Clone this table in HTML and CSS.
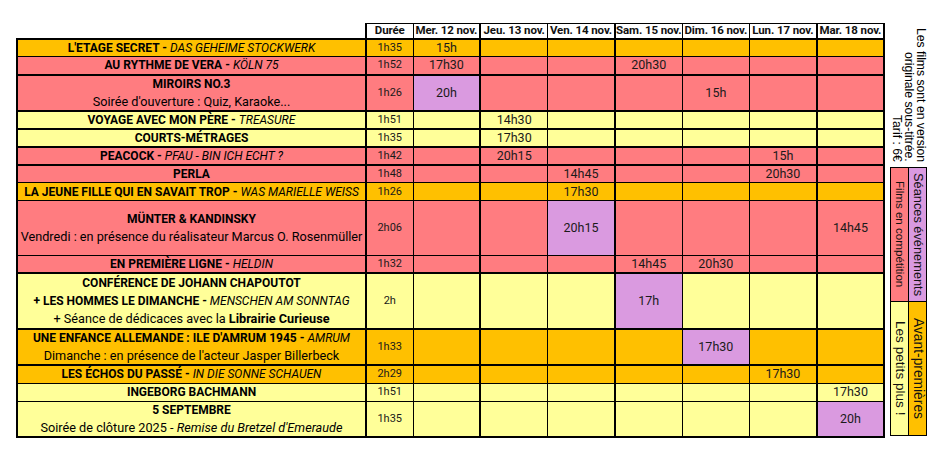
FILE: index.html
```html
<!DOCTYPE html>
<html lang="fr">
<head>
<meta charset="utf-8">
<title>Programme</title>
<link rel="stylesheet" href="styles.css">
</head>
<body>
<div class="page">
  <table class="schedule">
    <colgroup>
      <col class="c-title"><col class="c-dur">
      <col class="c-day"><col class="c-day"><col class="c-day"><col class="c-day"><col class="c-day"><col class="c-day"><col class="c-day">
    </colgroup>
    <thead>
      <tr class="head">
        <th class="blank"></th>
        <th>Durée</th>
        <th>Mer. 12 nov.</th>
        <th>Jeu. 13 nov.</th>
        <th>Ven. 14 nov.</th>
        <th>Sam. 15 nov.</th>
        <th>Dim. 16 nov.</th>
        <th>Lun. 17 nov.</th>
        <th>Mar. 18 nov.</th>
      </tr>
    </thead>
    <tbody>
      <tr class="h1 or tb">
        <td class="title"><b>L'ETAGE SECRET -</b> <i>DAS GEHEIME STOCKWERK</i></td>
        <td class="dur">1h35</td>
        <td>15h</td><td></td><td></td><td></td><td></td><td></td><td></td>
      </tr>
      <tr class="h1 rd">
        <td class="title"><b>AU RYTHME DE VERA -</b> <i>KÖLN 75</i></td>
        <td class="dur">1h52</td>
        <td>17h30</td><td></td><td></td><td>20h30</td><td></td><td></td><td></td>
      </tr>
      <tr class="h2 rd tb">
        <td class="title"><b class="line">MIROIRS NO.3</b><span class="line sub">Soirée d'ouverture : Quiz, Karaoke...</span></td>
        <td class="dur">1h26</td>
        <td class="ev">20h</td><td></td><td></td><td></td><td>15h</td><td></td><td></td>
      </tr>
      <tr class="h1 ye tb">
        <td class="title"><b>VOYAGE AVEC MON PÈRE -</b> <i>TREASURE</i></td>
        <td class="dur">1h51</td>
        <td></td><td>14h30</td><td></td><td></td><td></td><td></td><td></td>
      </tr>
      <tr class="h1 ye tb">
        <td class="title"><b>COURTS-MÉTRAGES</b></td>
        <td class="dur">1h35</td>
        <td></td><td>17h30</td><td></td><td></td><td></td><td></td><td></td>
      </tr>
      <tr class="h1 rd tb">
        <td class="title"><b>PEACOCK -</b> <i>PFAU - BIN ICH ECHT ?</i></td>
        <td class="dur">1h42</td>
        <td></td><td>20h15</td><td></td><td></td><td></td><td>15h</td><td></td>
      </tr>
      <tr class="h1 rd tb">
        <td class="title"><b>PERLA</b></td>
        <td class="dur">1h48</td>
        <td></td><td></td><td>14h45</td><td></td><td></td><td>20h30</td><td></td>
      </tr>
      <tr class="h1 or">
        <td class="title"><b>LA JEUNE FILLE QUI EN SAVAIT TROP -</b> <i>WAS MARIELLE WEISS</i></td>
        <td class="dur">1h26</td>
        <td></td><td></td><td>17h30</td><td></td><td></td><td></td><td></td>
      </tr>
      <tr class="h3 rd">
        <td class="title"><b class="line">MÜNTER &amp; KANDINSKY</b><span class="line sub">Vendredi : en présence du réalisateur Marcus O. Rosenmüller</span></td>
        <td class="dur">2h06</td>
        <td></td><td></td><td class="ev">20h15</td><td></td><td></td><td></td><td>14h45</td>
      </tr>
      <tr class="h1 rd">
        <td class="title"><b>EN PREMIÈRE LIGNE -</b> <i>HELDIN</i></td>
        <td class="dur">1h32</td>
        <td></td><td></td><td></td><td>14h45</td><td>20h30</td><td></td><td></td>
      </tr>
      <tr class="h3 ye tb">
        <td class="title"><b class="line">CONFÉRENCE DE JOHANN CHAPOUTOT</b><span class="line"><b>+ LES HOMMES LE DIMANCHE -</b> <i>MENSCHEN AM SONNTAG</i></span><span class="line sub">+ Séance de dédicaces avec la <b>Librairie Curieuse</b></span></td>
        <td class="dur">2h</td>
        <td></td><td></td><td></td><td class="ev">17h</td><td></td><td></td><td></td>
      </tr>
      <tr class="h2 or tb">
        <td class="title"><b class="line">UNE ENFANCE ALLEMANDE : ILE D'AMRUM 1945 - <i>AMRUM</i></b><span class="line sub">Dimanche : en présence de l'acteur Jasper Billerbeck</span></td>
        <td class="dur">1h33</td>
        <td></td><td></td><td></td><td></td><td class="ev">17h30</td><td></td><td></td>
      </tr>
      <tr class="h1 or tb">
        <td class="title"><b>LES ÉCHOS DU PASSÉ -</b> <i>IN DIE SONNE SCHAUEN</i></td>
        <td class="dur">2h29</td>
        <td></td><td></td><td></td><td></td><td></td><td>17h30</td><td></td>
      </tr>
      <tr class="h1 ye">
        <td class="title"><b>INGEBORG BACHMANN</b></td>
        <td class="dur">1h51</td>
        <td></td><td></td><td></td><td></td><td></td><td></td><td>17h30</td>
      </tr>
      <tr class="h2 ye last">
        <td class="title"><b class="line">5 SEPTEMBRE</b><span class="line sub">Soirée de clôture 2025 - <i>Remise du Bretzel d'Emeraude</i></span></td>
        <td class="dur">1h35</td>
        <td></td><td></td><td></td><td></td><td></td><td></td><td class="ev">20h</td>
      </tr>
    </tbody>
  </table>

  <aside class="side">
    <p class="note">Les films sont en version<br>originale sous-titrée.<br>Tarif : 6€</p>
    <div class="legend">
      <div class="key k-comp">Films en compétition</div>
      <div class="key k-ev">Séances événements</div>
      <div class="key k-plus">Les petits plus !</div>
      <div class="key k-avant">Avant-premières</div>
    </div>
  </aside>
</div>
</body>
</html>
```

FILE: styles.css
```css
* { box-sizing: border-box; }

html, body {
  margin: 0;
  padding: 0;
  background: #ffffff;
}

body {
  font-family: Roboto, "Liberation Sans", sans-serif;
  color: #111111;
}

.page {
  display: flex;
  align-items: flex-start;
  gap: 5px;
  padding: 23px 0 0 16px;
}

/* ---------- schedule table ---------- */
.schedule {
  border-collapse: collapse;
  table-layout: fixed;
  width: 867px;
}

.c-title { width: 349px; }
.c-dur { width: 47px; }
.c-day { width: 67.3px; }

.schedule th,
.schedule td {
  border: 1px solid #000;
  padding: 0;
  text-align: center;
  vertical-align: middle;
  white-space: nowrap;
}

.head { height: 15px; }
.head th {
  font-size: 11.5px;
  line-height: 13px;
  font-weight: 700;
  background: #fff;
  letter-spacing: -0.1px;
}
.head th.blank {
  border: none;
  background: transparent;
}

.schedule td {
  font-size: 12.5px;
  line-height: 14px;
  color: #1a1a1a;
}

.schedule td.title {
  font-size: 12px;
  color: #000;
  overflow: visible;
  border-left: 2px solid #000;
  line-height: 16px;
}
.schedule td.title b { font-weight: 700; }
.schedule td.title i { font-weight: 400; }
.schedule td.title b i { font-weight: 400; }

.line { display: block; }
.sub { font-size: 12.7px; }

.schedule td.dur {
  font-size: 11px;
  border-left: 2px solid #000;
}

/* thicker column separators */
.schedule td:nth-child(4),
.schedule td:nth-child(6),
.schedule td:nth-child(9),
.schedule th:nth-child(4),
.schedule th:nth-child(6),
.schedule th:nth-child(9) {
  border-left: 2px solid #000;
}
.schedule th:nth-child(2) { border-left: 2px solid #000; }
.schedule td:last-child,
.schedule th:last-child {
  border-right: 2px solid #000;
}

/* row heights */
.h1 { height: 18px; }
.h2 { height: 34px; }
.h2 td.title { line-height: 17px; }
.h3 { height: 54.5px; }
.h3 td.title { line-height: 18px; }

/* thicker row separators */
.tb td { border-top: 2px solid #000; }
.last td { border-bottom: 2px solid #000; }

/* row colours */
.or td { background: #ffc000; }
.rd td { background: #ff7c80; }
.ye td { background: #ffff99; }
.schedule td.ev { background: #da9ae0; }

/* ---------- side notes & legend ---------- */
.side {
  display: flex;
  flex-direction: column;
  gap: 5px;
  padding-top: 2px;
  font-family: "Liberation Sans", Arial, sans-serif;
}

.note {
  margin: 0;
  writing-mode: vertical-rl;
  height: 137px;
  width: 37px;
  font-size: 12.2px;
  line-height: 11.8px;
  text-align: end;
  white-space: nowrap;
  color: #000;
  padding-right: 1px;
}

.legend {
  display: grid;
  grid-template-columns: 17px 17px;
  grid-template-rows: 133px 133px;
  gap: 1px;
  background: #000;
  border: 1px solid #000;
  width: 37px;
}

.key {
  writing-mode: vertical-rl;
  display: flex;
  align-items: center;
  justify-content: center;
  line-height: 14px;
  color: #111;
  white-space: nowrap;
}

.k-comp { background: #ff7c80; font-size: 11.6px; }
.k-ev { background: #da9ae0; font-size: 12.8px; }
.k-plus { background: #ffff99; font-size: 13.6px; }
.k-avant { background: #ffc000; font-size: 13.8px; }
```
